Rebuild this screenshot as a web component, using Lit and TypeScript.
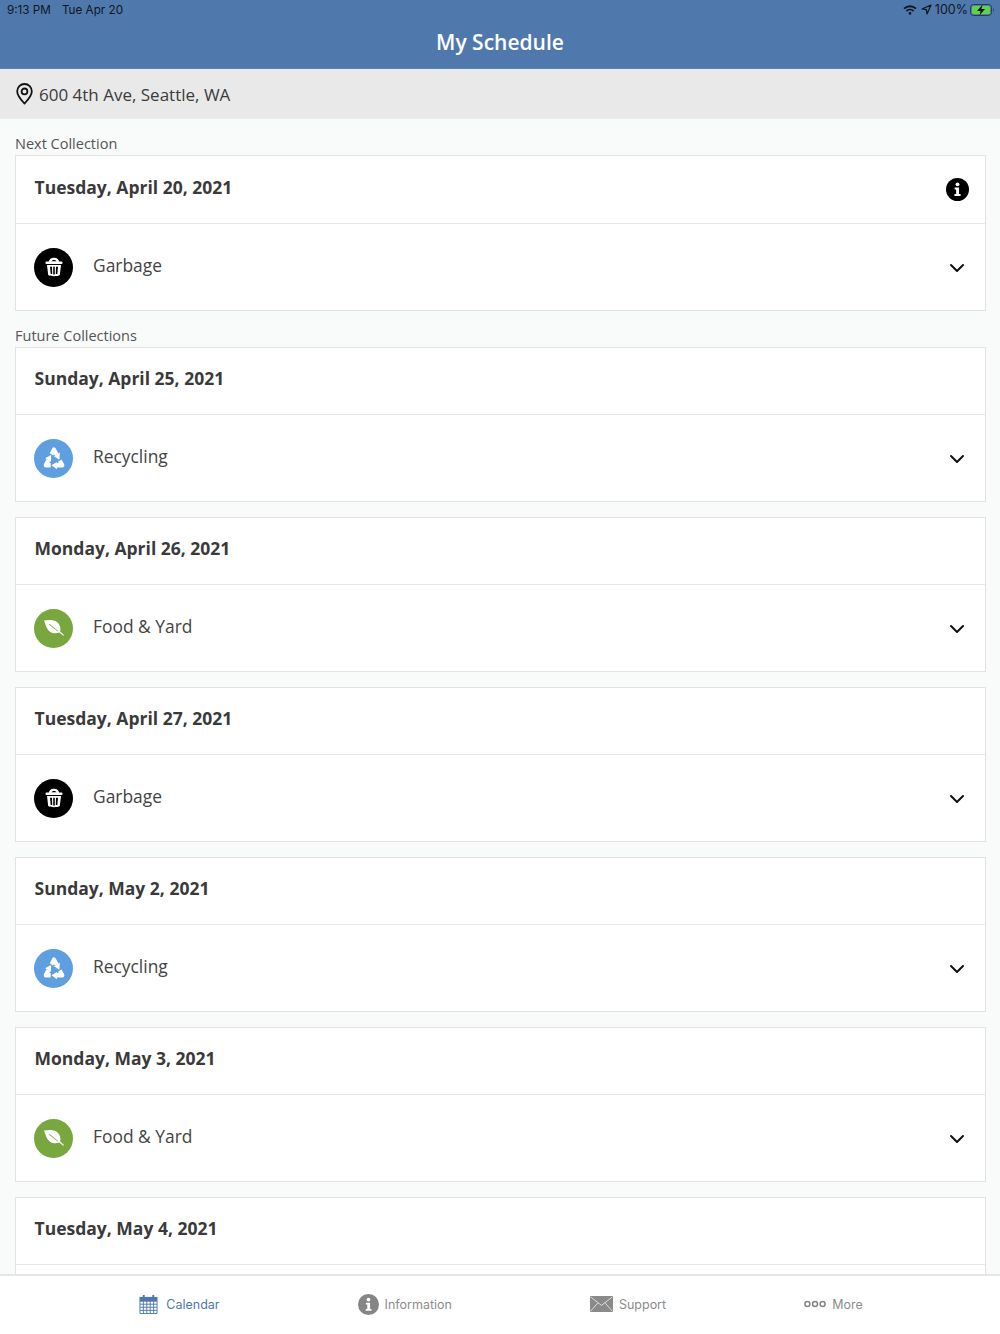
import { LitElement, html, css, svg } from "lit";
import { customElement } from "lit/decorators.js";

type Kind = "garbage" | "recycling" | "food";

const KINDS: Record<Kind, { label: string; cls: string }> = {
  garbage: { label: "Garbage", cls: "garbage" },
  recycling: { label: "Recycling", cls: "recycling" },
  food: { label: "Food & Yard", cls: "food" },
};

// last card runs under the tab bar, only its date and divider show
const future: { date: string; kind?: Kind }[] = [
  { date: "Sunday, April 25, 2021", kind: "recycling" },
  { date: "Monday, April 26, 2021", kind: "food" },
  { date: "Tuesday, April 27, 2021", kind: "garbage" },
  { date: "Sunday, May 2, 2021", kind: "recycling" },
  { date: "Monday, May 3, 2021", kind: "food" },
  { date: "Tuesday, May 4, 2021" },
];

const recycleArm = (angle: number) => svg`<g transform="rotate(${angle})">
  <path d="M-2.29 -4.84 L0 -8.8 L2.44 -4.58" fill="none" stroke="#fff" stroke-width="3.8" stroke-linejoin="round"/>
  <path d="M5.47 -6.33 L0.02 -3.18 L4.95 -0.22 Z" fill="#fff"/>
</g>`;

const kindIcon = (kind: Kind) => {
  if (kind === "garbage") {
    return svg`<svg width="20" height="20" viewBox="0 0 20 20" fill="#fff">
      <path d="M5 5 C5 -0.6 15 -0.6 15 5 Z M7.3 4.6 C7.8 2.4 12.2 2.4 12.7 4.6 Z" fill-rule="evenodd"/>
      <rect x="1.5" y="4.6" width="17" height="2.4" rx="1"/>
      <path d="M3 8 H17 L15.8 18 C14 19.6 6 19.6 4.2 18 Z M6 9.8 L6.7 17 H8.2 L8 9.8 Z M9.2 9.8 V17.4 H10.8 V9.8 Z M12 9.8 L11.8 17 H13.3 L14 9.8 Z" fill-rule="evenodd"/>
    </svg>`;
  }
  if (kind === "recycling") {
    return svg`<svg width="22" height="22" viewBox="-11 -11 22 22">
      <g transform="translate(0 2) scale(1.08 1.18)">${recycleArm(0)}${recycleArm(120)}${recycleArm(240)}</g>
    </svg>`;
  }
  return svg`<svg width="22" height="22" viewBox="0 0 22 22" fill="#fff">
    <path d="M1 3.4 C6 2.6 10.8 2.6 14 5 C17 7.4 18 11.2 17.2 14.6 L21 18 L20.3 18.8 L16.3 15.6 C12.6 17 8.4 16.4 5.6 13.4 C3.4 11 2.4 7 1 3.4 Z M6.4 6.8 L6 7.4 L14.6 14.4 L15 13.9 Z" fill-rule="evenodd"/>
  </svg>`;
};

const chevron = html`<svg class="chev" width="16" height="10" viewBox="0 0 16 10" fill="none" stroke="#111" stroke-width="2" stroke-linecap="round" stroke-linejoin="round"><path d="M2 2 L8 8 L14 2"/></svg>`;

@customElement("app-root")
export class AppRoot extends LitElement {
  static styles = css`
    :host {
      display: flex;
      flex-direction: column;
      width: 1000px;
      height: 1334px;
      overflow: hidden;
      background: #f9fafa;
      font-family: "Open Sans", sans-serif;
      color: #3b3b3b;
    }
    .top {
      background: #4f79ad;
      height: 69px;
      flex: none;
      border-bottom: 1px solid #5d83b2;
      box-sizing: border-box;
    }
    .status {
      display: flex;
      justify-content: space-between;
      align-items: center;
      height: 19px;
      padding: 0 5px 0 7px;
      font-family: Inter, sans-serif;
      font-size: 11.7px;
      color: #10161f;
    }
    .status .left {
      display: flex;
      gap: 11px;
    }
    .status .right {
      display: flex;
      align-items: center;
      gap: 3px;
    }
    .status .arrow {
      margin-left: 1px;
    }
    .status .pct {
      font-size: 12.5px;
    }
    .status .battery {
      margin-left: -1px;
    }
    .title {
      text-align: center;
      color: #fff;
      font-size: 21px;
      font-weight: 600;
      line-height: 27px;
      margin-top: 10px;
    }
    .address {
      flex: none;
      height: 50px;
      background: #e9e9e9;
      display: flex;
      align-items: center;
      padding-left: 16px;
      gap: 6px;
      font-size: 17px;
      color: #3b3b3b;
    }
    .address span {
      margin-top: 1px;
    }
    .content {
      flex: 1;
      min-height: 0;
      overflow: hidden;
      padding: 0 14px 0 15px;
    }
    .label {
      font-size: 14.5px;
      line-height: 19px;
      color: #555;
      margin-top: 15px;
      margin-bottom: 2px;
    }
    .card {
      background: #fff;
      border: 1px solid #e2e2e2;
      margin-bottom: 15px;
    }
    .card.last {
      margin-bottom: 0;
    }
    .date {
      display: flex;
      justify-content: space-between;
      align-items: center;
      height: 66px;
      padding: 0 16px 0 18.5px;
      font-size: 17.5px;
      font-weight: 700;
      color: #3a3a3a;
      box-sizing: border-box;
    }
    .card.last .date {
      height: 67px;
    }
    .date span {
      margin-top: -6px;
    }
    .row {
      display: flex;
      align-items: center;
      height: 87px;
      border-top: 1px solid #e8e8e8;
      padding: 0 20px 0 18px;
      box-sizing: border-box;
      font-size: 17.4px;
      color: #444;
    }
    .row .name {
      flex: 1;
      margin-left: 20px;
      margin-top: -5px;
    }
    .badge {
      width: 39px;
      height: 39px;
      border-radius: 50%;
      display: flex;
      align-items: center;
      justify-content: center;
      flex: none;
    }
    .garbage {
      background: #000;
    }
    .recycling {
      background: #5f9fe0;
    }
    .food {
      background: #78a73f;
    }
    .chev {
      flex: none;
      margin-top: 1px;
    }
    .tabs {
      flex: none;
      height: 60px;
      box-sizing: border-box;
      background: #fff;
      border-top: 2px solid #e6e6e6;
      padding: 0 0 2px 2px;
      display: flex;
      justify-content: center;
      gap: 138px;
      align-items: center;
      font-size: 12.5px;
      font-family: Inter, sans-serif;
      color: #8c8c8c;
    }
    .tab {
      display: flex;
      align-items: center;
      gap: 6px;
    }
    .tab.on {
      color: #4f79ad;
      gap: 8px;
    }
  `;

  private card(date: string, kind?: Kind, opts: { info?: boolean; last?: boolean } = {}) {
    return html`<div class="card ${opts.last ? "last" : ""}">
      <div class="date">
        <span>${date}</span>
        ${opts.info
          ? html`<svg width="23" height="23" viewBox="0 0 24 24">
              <circle cx="12" cy="12" r="12" fill="#000" />
              <circle cx="12" cy="6.6" r="2" fill="#fff" />
              <path d="M9 10 H13.6 V16.8 H15.2 V18.8 H8.8 V16.8 H10.6 V12 H9 Z" fill="#fff" />
            </svg>`
          : ""}
      </div>
      <div class="row">
        ${kind
          ? html`<div class="badge ${KINDS[kind].cls}">${kindIcon(kind)}</div>
              <div class="name">${KINDS[kind].label}</div>
              ${chevron}`
          : ""}
      </div>
    </div>`;
  }

  render() {
    return html`
      <div class="top">
        <div class="status">
          <div class="left"><span>9:13 PM</span><span>Tue Apr 20</span></div>
          <div class="right">
            <svg width="14" height="10" viewBox="0 0 14 10" fill="none" stroke="#10161f" stroke-width="1.9">
              <path d="M1 3.6 C4.4 0.5 9.6 0.5 13 3.6" />
              <path d="M3.4 6 C5.4 4.2 8.6 4.2 10.6 6" />
              <circle cx="7" cy="8.4" r="1.3" fill="#10161f" stroke="none" />
            </svg>
            <svg class="arrow" width="11" height="11" viewBox="0 0 11 11" fill="none" stroke="#10161f" stroke-width="1.2" stroke-linejoin="round">
              <path d="M10 1 L1 5 L5.4 5.6 L6 10 Z" />
            </svg>
            <span class="pct">100%</span>
            <svg class="battery" width="25" height="12" viewBox="0 0 25 12">
              <rect x="0.5" y="0.5" width="21" height="11" rx="3" fill="none" stroke="#2d3d50" />
              <rect x="2" y="2" width="18" height="8" rx="1.5" fill="#5fd14f" />
              <path d="M23 4 C24 4.4 24 7.6 23 8 Z" fill="#2d3d50" />
              <path d="M12.6 0.6 L7 7 H10.6 L9.4 11.4 L15 5 H11.4 Z" fill="#10161f" />
            </svg>
          </div>
        </div>
        <div class="title">My Schedule</div>
      </div>
      <div class="address">
        <svg width="17" height="22" viewBox="0 0 17 22" fill="none" stroke="#111" stroke-width="1.8">
          <path d="M8.5 20.6 C5 16.6 1.2 12.6 1.2 8.4 C1.2 4.2 4.4 1 8.5 1 C12.6 1 15.8 4.2 15.8 8.4 C15.8 12.6 12 16.6 8.5 20.6 Z" stroke-linejoin="round" />
          <circle cx="8.5" cy="8.4" r="2.9" />
        </svg>
        <span>600 4th Ave, Seattle, WA</span>
      </div>
      <div class="content">
        <div class="label">Next Collection</div>
        ${this.card("Tuesday, April 20, 2021", "garbage", { info: true, last: true })}
        <div class="label">Future Collections</div>
        ${future.map((f) => this.card(f.date, f.kind))}
      </div>
      <div class="tabs">
        <div class="tab on">
          <svg width="19" height="21" viewBox="0 0 20 21">
            <rect x="0.5" y="2.5" width="19" height="4.5" fill="#4f79ad" />
            <rect x="4" y="0.5" width="2" height="4" fill="#4f79ad" />
            <rect x="14" y="0.5" width="2" height="4" fill="#4f79ad" />
            <path d="M1 7 H19 V20 H1 Z M1 10.2 H19 M1 13.4 H19 M1 16.7 H19 M4.6 7 V20 M8.2 7 V20 M11.8 7 V20 M15.4 7 V20" fill="none" stroke="#4f79ad" stroke-width="1" />
          </svg>
          <span>Calendar</span>
        </div>
        <div class="tab">
          <svg width="21" height="21" viewBox="0 0 24 24">
            <circle cx="12" cy="12" r="12" fill="#858585" />
            <circle cx="12" cy="6.4" r="2.1" fill="#fff" />
            <path d="M9 10 H13.8 V17 H15.4 V19 H8.8 V17 H10.6 V12 H9 Z" fill="#fff" />
          </svg>
          <span>Information</span>
        </div>
        <div class="tab">
          <svg width="23" height="16" viewBox="0 0 23 16">
            <rect width="23" height="16" fill="#8a8a8a" />
            <path d="M0.5 0.8 L11.5 9.4 L22.5 0.8 M0.5 15.4 L8 6.8 M22.5 15.4 L15 6.8" fill="none" stroke="#e4e4e4" stroke-width="0.9" />
          </svg>
          <span>Support</span>
        </div>
        <div class="tab">
          <svg width="22" height="8" viewBox="0 0 22 8" fill="none" stroke="#858585" stroke-width="1.5">
            <circle cx="3.4" cy="4" r="2.5" />
            <circle cx="11" cy="4" r="2.5" />
            <circle cx="18.6" cy="4" r="2.5" />
          </svg>
          <span>More</span>
        </div>
      </div>
    `;
  }
}
